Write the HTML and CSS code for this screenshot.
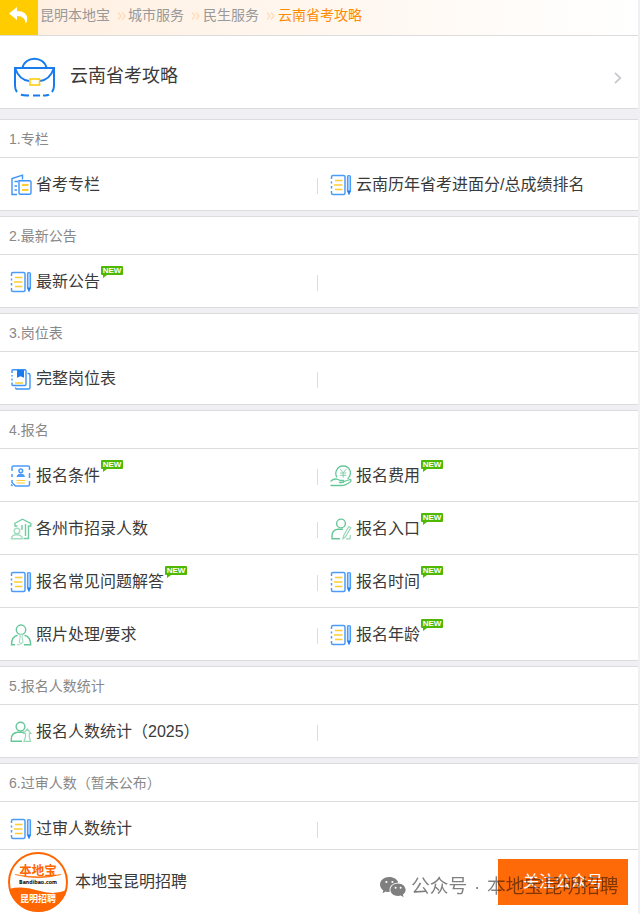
FILE: index.html
```html
<!DOCTYPE html>
<html lang="zh-CN">
<head>
<meta charset="utf-8">
<meta name="viewport" content="width=device-width, initial-scale=1.0">
<title>云南省考攻略</title>
<link rel="stylesheet" href="styles.css">
</head>
<body>
<svg class="sprite" width="0" height="0">
  <symbol id="i-note" viewBox="0 0 22 22">
    <g fill="none" stroke="#4b9cf9" stroke-width="1.5">
      <path d="M1.5 5V3Q1.5 1.5 3 1.5H13.5Q15 1.5 15 3V19Q15 20.5 13.5 20.5H3Q1.5 20.5 1.5 19V17M1.5 7.5V9.5M1.5 12V14.5"/>
      <path d="M17.5 17V2.5Q17.5 1.5 19 1.5T20.5 2.5V17L19 20Z" fill="#a9d0fd" stroke-width="1.2"/>
    </g>
    <path d="M17.5 16.5H20.5L19 21Z" fill="#187cf0"/>
    <path d="M5 6.5H12.5M4 11H12.5M5 15.5H12.5" stroke="#fc3" stroke-width="1.4"/>
  </symbol>
  <symbol id="i-build" viewBox="0 0 22 22">
    <g fill="none" stroke="#3c93f8" stroke-width="1.4">
      <path d="M7 20.5H2V4.5L12.5 1.2V5.5"/>
      <path d="M9 6.7H19.5Q21 6.7 21 8V19Q21 20.3 19.5 20.3H10.5Q9 20.3 9 19V6.7Z"/>
      <path d="M4.5 7.5H8M4.5 12H7M4.5 16H7" stroke-width="1.7"/>
    </g>
    <path d="M12 11H18.5M12 16H18.5" stroke="#fc3" stroke-width="2"/>
  </symbol>
  <symbol id="i-book" viewBox="0 0 22 22">
    <g fill="none" stroke="#3c93f8" stroke-width="1.4">
      <path d="M2 5V2.8Q2 1.8 3 1.8H15Q16 1.8 16 3V16.5Q16 17.5 15 17.5H3Q2 17.5 2 16.5V14.5M2 7V8.5M2 10.5V12.5"/>
      <path d="M17.5 5.5H18.5Q20 5.5 20 7V19.5Q20 21 18.5 21H7Q5.5 21 5.5 19.5"/>
    </g>
    <path d="M7 2H14V9.8L10.5 8.2L7 9.8Z" fill="#187cf0"/>
    <path d="M5 15H13" stroke="#fc3" stroke-width="1.5"/>
  </symbol>
  <symbol id="i-card" viewBox="0 0 22 22">
    <g fill="none" stroke="#4b9cf9" stroke-width="1.5">
      <path d="M2 6V2.5Q2 1 3.5 1H18Q19.5 1 19.5 2.5V5M2 9V12M19.5 8V13M2 15V17.5L5.5 21H18Q19.5 21 19.5 19.5V16M1 19.5L2.5 21"/>
      <circle cx="10.8" cy="5.8" r="1.9"/>
      <path d="M7 11.5Q7.5 9 10.8 9T14.5 11.5Z" fill="#4b9cf9" stroke-width="1"/>
    </g>
    <path d="M6.5 15.5H15M6.5 18H15" stroke="#fc3" stroke-width="1.2"/>
  </symbol>
  <symbol id="i-fee" viewBox="0 0 22 22">
    <g fill="none" stroke="#66c799" stroke-width="1.3" stroke-linecap="round" stroke-linejoin="round">
      <path d="M6.7 12Q5 9 6.4 5.5Q8.5 1 13.2 1Q18 1 20 5.5Q21.5 10 18 13.5"/>
      <path d="M10.5 4.5L13.2 7.8L16 4.5M13.2 7.8V12.3M10.5 8H16M10.5 10.3H16" stroke-width="1" stroke="#83cfaa"/>
      <path d="M1 16Q4 13 8 14.5L10 15.5H13.5Q14.5 17.5 12 17.5H9.5M14 16.5L20 14.5Q22 15 20 17Q16 20.5 11 20.5H1"/>
    </g>
  </symbol>
  <symbol id="i-hall" viewBox="0 0 22 22">
    <g fill="none" stroke="#73cca1" stroke-width="1.4">
      <path d="M4.5 5.5L12.5 1.2L20.8 5.5V8H18.5V20.5H13.5M5 5.5V8H7.5M12 7V12M15.5 6V18"/>
      <circle cx="7" cy="13" r="2.8" stroke="#a4dec1"/>
      <path d="M1.3 20.7Q1.7 16.7 6.8 16.7T12.3 20.7Z" stroke="#a4dec1"/>
    </g>
  </symbol>
  <symbol id="i-edit" viewBox="0 0 22 22">
    <g fill="none" stroke="#66c799" stroke-width="1.4">
      <circle cx="11" cy="5.5" r="4.4"/>
      <path d="M13 11.3H8Q2 12 2 18V20.7H10"/>
      <path d="M13 20.7L13.7 17.5L18.8 8.5L20.8 9.7L15.5 18.8ZM16 20.8H20Q20.5 18.5 20 17" stroke="#96d8b7" stroke-width="1.2"/>
    </g>
  </symbol>
  <symbol id="i-person" viewBox="0 0 22 22">
    <g fill="none" stroke="#66c799" stroke-width="1.4">
      <circle cx="11" cy="5.7" r="4.7"/>
      <path d="M7.5 11.2Q1.5 12.5 1.5 20.7H5M14.5 11.2Q20.5 12.5 20.7 20.7H14"/>
      <path d="M9.5 10.5H12.5L12 12.5L13 18L11 20L9.3 18L10.3 12.5ZM7 20.7H10" stroke="#a4dec1" stroke-width="1.1"/>
    </g>
  </symbol>
  <symbol id="i-rise" viewBox="0 0 22 22">
    <g fill="none" stroke="#66c799" stroke-width="1.4">
      <circle cx="10.5" cy="5.6" r="4.4"/>
      <path d="M14 11.2H7.5Q1.3 12 1.3 18V20.3H12"/>
      <path d="M17.3 8L21 12.5H19.3V16L20.5 20.3H14L15.5 16V12.5H13.5Z" stroke="#96d8b7" stroke-width="1.2"/>
    </g>
  </symbol>
  <symbol id="i-sep" viewBox="0 0 9 8">
    <path d="M1 .5L4 4L1 7.5M5 .5L8 4L5 7.5" fill="none" stroke="#ffdcb9" stroke-width="1.3"/>
  </symbol>
</svg>

<div class="page">
  <nav class="crumbs">
    <a class="back">
      <svg width="20" height="18" viewBox="0 0 20 18"><path d="M0 6.5L8 0V4Q18 4 18.2 12Q18.3 15 16.5 16.5Q16.5 9 8 9V13Z" fill="#fff"/></svg>
    </a>
    <a>昆明本地宝</a>
    <svg class="sep"><use href="#i-sep"/></svg>
    <a>城市服务</a>
    <svg class="sep"><use href="#i-sep"/></svg>
    <a>民生服务</a>
    <svg class="sep"><use href="#i-sep"/></svg>
    <a class="on">云南省考攻略</a>
  </nav>

  <header class="title">
    <svg class="bag" width="42" height="40" viewBox="0 0 42 40">
      <g fill="none" stroke="#187cf0" stroke-width="2">
        <path d="M8.5 11C11 -1.5 30 -1.5 32.5 11"/>
        <path d="M1 29V11H40V29M1.5 12Q5 22.5 15 24M39.5 12Q36 22.5 26 24"/>
        <path d="M1 29Q1.2 33 3 35M40 29Q39.8 33 38 35M7 37.5Q9 38.5 15 38.5M19 38.5H26M29 38.5Q34 38.5 35 37.5"/>
      </g>
      <rect x="16" y="22" width="9.5" height="6" fill="#fff" stroke="#fc1" stroke-width="1.6"/>
    </svg>
    <h1>云南省考攻略</h1>
    <svg class="go" width="8" height="12" viewBox="0 0 8 12"><path d="M1 .8L6.3 6L1 11.2" fill="none" stroke="#c9c9d0" stroke-width="1.8"/></svg>
  </header>

  <section>
    <h2>1.专栏</h2>
    <div class="row">
      <a class="cell"><svg class="icon"><use href="#i-build"/></svg>省考专栏</a>
      <a class="cell"><svg class="icon"><use href="#i-note"/></svg>云南历年省考进面分/总成绩排名</a>
    </div>
  </section>

  <section>
    <h2>2.最新公告</h2>
    <div class="row">
      <a class="cell"><svg class="icon"><use href="#i-note"/></svg>最新公告<i class="new">NEW</i></a>
    </div>
  </section>

  <section>
    <h2>3.岗位表</h2>
    <div class="row">
      <a class="cell"><svg class="icon"><use href="#i-book"/></svg>完整岗位表</a>
    </div>
  </section>

  <section>
    <h2>4.报名</h2>
    <div class="row">
      <a class="cell"><svg class="icon"><use href="#i-card"/></svg>报名条件<i class="new">NEW</i></a>
      <a class="cell"><svg class="icon"><use href="#i-fee"/></svg>报名费用<i class="new">NEW</i></a>
    </div>
    <div class="row">
      <a class="cell"><svg class="icon"><use href="#i-hall"/></svg>各州市招录人数</a>
      <a class="cell"><svg class="icon"><use href="#i-edit"/></svg>报名入口<i class="new">NEW</i></a>
    </div>
    <div class="row">
      <a class="cell"><svg class="icon"><use href="#i-note"/></svg>报名常见问题解答<i class="new">NEW</i></a>
      <a class="cell"><svg class="icon"><use href="#i-note"/></svg>报名时间<i class="new">NEW</i></a>
    </div>
    <div class="row">
      <a class="cell"><svg class="icon"><use href="#i-person"/></svg>照片处理/要求</a>
      <a class="cell"><svg class="icon"><use href="#i-note"/></svg>报名年龄<i class="new">NEW</i></a>
    </div>
  </section>

  <section>
    <h2>5.报名人数统计</h2>
    <div class="row">
      <a class="cell"><svg class="icon"><use href="#i-rise"/></svg>报名人数统计（2025）</a>
    </div>
  </section>

  <section>
    <h2>6.过审人数（暂未公布）</h2>
    <div class="row">
      <a class="cell"><svg class="icon"><use href="#i-note"/></svg>过审人数统计</a>
    </div>
  </section>
</div>

<footer class="follow">
  <svg class="logo" width="60" height="60" viewBox="0 0 60 60">
    <circle cx="30" cy="30" r="29" fill="#fff" stroke="#f60" stroke-width="2"/>
    <path d="M1 37Q14 33.5 30 38.5T59 38A30 30 0 0 1 1 37Z" fill="#f60"/>
    <text class="logo-name" x="30" y="22.5">本地宝</text>
    <path d="M7 22.5Q30 29 53 22.5Q30 27 7 22.5Z" fill="#f60" stroke="#f60" stroke-width=".5"/>
    <text class="logo-url" x="30" y="32" textLength="38" lengthAdjust="spacingAndGlyphs">Bandibao.com</text>
    <text class="logo-city" x="30" y="50">昆明招聘</text>
  </svg>
  <span class="name">本地宝昆明招聘</span>
  <a class="btn">关注公众号</a>
</footer>

<div class="mark">
  <svg width="26" height="21" viewBox="0 0 26 21">
    <path d="M9.3 0C4 0 0 3.4 0 7.6C0 10 1.3 12 3.3 13.4L2.5 16.2L5.8 14.5Q7.5 15.1 9.5 15Q8.2 7 18.3 5.6C17.3 2.3 13.8 0 9.3 0Z"/>
    <path d="M18 6.4C13.8 6.4 10.4 9.2 10.4 12.8S13.8 19 18 19Q19.5 19 20.8 18.6L23.6 20.2L22.9 17.6C24.6 16.4 25.6 14.7 25.6 12.8C25.6 9.2 22.2 6.4 18 6.4Z"/>
    <g fill="#fff"><circle cx="6.4" cy="5" r="1.1"/><circle cx="12.4" cy="5" r="1.1"/><circle cx="15.6" cy="10.7" r="1"/><circle cx="20.6" cy="10.7" r="1"/></g>
  </svg>
  <span>公众号 · 本地宝昆明招聘</span>
</div>
</body>
</html>
```

FILE: styles.css
```css
body {
  margin: 0;
  height: 914px;
  overflow: hidden;
  background: #efeff4;
  color: #3a3a3a;
  font: 16px/24px "Liberation Sans", "Noto Sans CJK SC", sans-serif;
}

.sprite {
  position: absolute;
}

.page {
  width: 638px;
}

/* breadcrumb bar */
.crumbs {
  display: flex;
  align-items: center;
  height: 35px;
  border-bottom: 1px solid #dcdcdc;
  background: linear-gradient(to right, #ffefe0, #fff);
  color: #999;
  font-size: 14px;
  line-height: 31px;
}

.crumbs a {
  height: 35px;
}

.crumbs .back {
  display: flex;
  justify-content: center;
  width: 38px;
  height: 35px;
  margin-right: 2px;
  background: #fc0;
}

.back svg {
  margin-top: 7px;
}

.crumbs .on {
  color: #ff8a00;
}

.sep {
  width: 9px;
  height: 8px;
  margin: 0 2px 4px 7px;
}

.sep:nth-of-type(n+2) {
  margin-right: 3px;
}

/* page title */
.title {
  display: flex;
  align-items: center;
  height: 72px;
  padding: 0 16px 0 14px;
  border-bottom: 1px solid #dcdcdc;
  background: #fff;
}

.bag {
  margin: 10px 14px 0 0;
}

.title h1 {
  flex: 1;
  margin: 8px 0 0;
  font-size: 18px;
  font-weight: normal;
  line-height: 24px;
}

.go {
  margin-top: 12px;
}

/* link groups */
section {
  margin-top: 5px;
  border-top: 1px solid #dcdcdc;
  background: #fff;
}

.title + section {
  margin-top: 10px;
}

section h2 {
  height: 37px;
  margin: 0;
  padding-left: 9px;
  border-bottom: 1px solid #dcdcdc;
  color: #888;
  font-size: 14px;
  font-weight: normal;
  line-height: 39px;
}

.row {
  display: flex;
  height: 52px;
  border-bottom: 1px solid #dcdcdc;
}

.cell {
  display: flex;
  flex: none;
  align-items: center;
  box-sizing: border-box;
  width: 320px;
  height: 52px;
  padding: 2px 2px 0 10px;
  white-space: nowrap;
}

.cell:first-child::after {
  content: "";
  width: 1px;
  height: 16px;
  margin: 2px 0 0 auto;
  background: #dcdcdc;
}

.icon {
  width: 22px;
  height: 22px;
  margin-right: 4px;
}

.new {
  position: relative;
  width: 22px;
  height: 9px;
  margin: -23px 0 0 1px;
  border-radius: 1px;
  background: #4fb800;
  color: #fff;
  font: bold 8px/10px "Liberation Sans", sans-serif;
  text-align: center;
}

.new::after {
  content: "";
  position: absolute;
  left: 2px;
  top: 9px;
  border-top: 3px solid #4fb800;
  border-right: 4px solid transparent;
}

/* fixed follow bar */
.follow {
  position: fixed;
  left: 0;
  bottom: 0;
  display: flex;
  align-items: center;
  box-sizing: border-box;
  width: 638px;
  height: 65px;
  padding: 0 10px 0 8px;
  border-top: 1px solid #dcdcdc;
  background: #fff;
}

.logo text {
  text-anchor: middle;
  font-family: "Noto Sans CJK SC", sans-serif;
  font-weight: bold;
}

.logo .logo-name {
  fill: #f60;
  font-size: 12.5px;
}

.logo .logo-url {
  fill: #111;
  font-family: "DejaVu Sans", sans-serif;
  font-size: 5.5px;
}

.logo .logo-city {
  fill: #fff;
  font-size: 9px;
}

.name {
  flex: 1;
  margin-left: 7px;
}

.btn {
  width: 130px;
  height: 46px;
  margin-bottom: 1px;
  background: #ff6a08;
  color: #fff;
  line-height: 46px;
  text-align: center;
}

/* account mark over the bar */
.mark {
  position: fixed;
  left: 380px;
  bottom: 14px;
  display: flex;
  align-items: center;
  height: 26px;
  opacity: .5;
  color: #000;
  font: 18.8px/26px "Liberation Sans", "Noto Sans CJK SC", sans-serif;
  white-space: nowrap;
  word-spacing: 1.5px;
}

.mark svg {
  margin-right: 5px;
}
```
